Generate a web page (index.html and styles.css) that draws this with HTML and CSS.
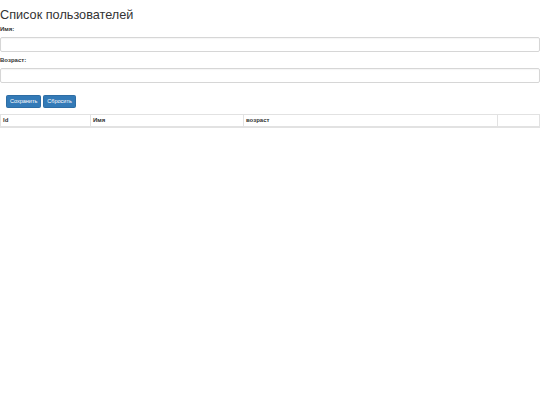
FILE: index.html
```html
<!DOCTYPE html>
<html lang="ru">
<head>
<meta charset="utf-8">
<title>Список пользователей</title>
<link rel="stylesheet" href="styles.css">
</head>
<body>
<h3 class="title">Список пользователей</h3>
<form class="user-form">
  <div class="form-group">
    <label class="form-label" for="name">Имя:</label>
    <input class="form-control" id="name" type="text">
  </div>
  <div class="form-group">
    <label class="form-label" for="age">Возраст:</label>
    <input class="form-control" id="age" type="text">
  </div>
  <div class="actions">
    <button class="btn" type="button">Сохранить</button>
    <button class="btn" type="button">Сбросить</button>
  </div>
</form>
<table class="users">
  <thead>
    <tr>
      <th class="col-id">Id</th>
      <th class="col-name">Имя</th>
      <th class="col-age">возраст</th>
      <th class="col-act"></th>
    </tr>
  </thead>
</table>
</body>
</html>
```
FILE: styles.css
```css
html, body {
  margin: 0;
  padding: 0;
  background: #fff;
}
body {
  font-family: "Liberation Sans", Arial, sans-serif;
  color: #333;
}
.title {
  font-size: 12.7px;
  font-weight: 400;
  line-height: 13px;
  margin: 9px 0 3px;
}
.user-form {
  margin: 0;
}
.form-group {
  margin-bottom: 4px;
}
.form-label {
  display: block;
  font-size: 6px;
  font-weight: 700;
  line-height: 8px;
  margin-bottom: 4px;
}
.form-control {
  display: block;
  box-sizing: border-box;
  width: 100%;
  height: 15px;
  margin: 0;
  padding: 0 6px;
  border: 1px solid #d6d6d6;
  border-radius: 2px;
  box-shadow: inset 0 1px 1px rgba(0, 0, 0, .04);
  background: #fff;
  font-size: 7px;
}
.actions {
  display: flex;
  gap: 2px;
  padding-left: 6px;
  margin-top: 12px;
}
.btn {
  box-sizing: border-box;
  height: 13px;
  padding: 0 3px;
  margin: 0;
  border: 1px solid #2e6da4;
  border-radius: 1.5px;
  background: #337ab7;
  color: #fff;
  font-family: "Liberation Sans", Arial, sans-serif;
  font-size: 5.5px;
  line-height: 11px;
}
.users {
  width: 100%;
  margin-top: 6px;
  border-collapse: collapse;
  table-layout: fixed;
}
.users th {
  text-align: left;
  font-size: 6px;
  font-weight: 700;
  line-height: 7px;
  padding: 2px 2px;
  border: 1px solid #e2e2e2;
  border-bottom: 2px solid #e2e2e2;
}
.col-id { width: 85px; }
.col-name { width: 148px; }
.col-age { width: 249px; }
.col-act { width: auto; }
```
